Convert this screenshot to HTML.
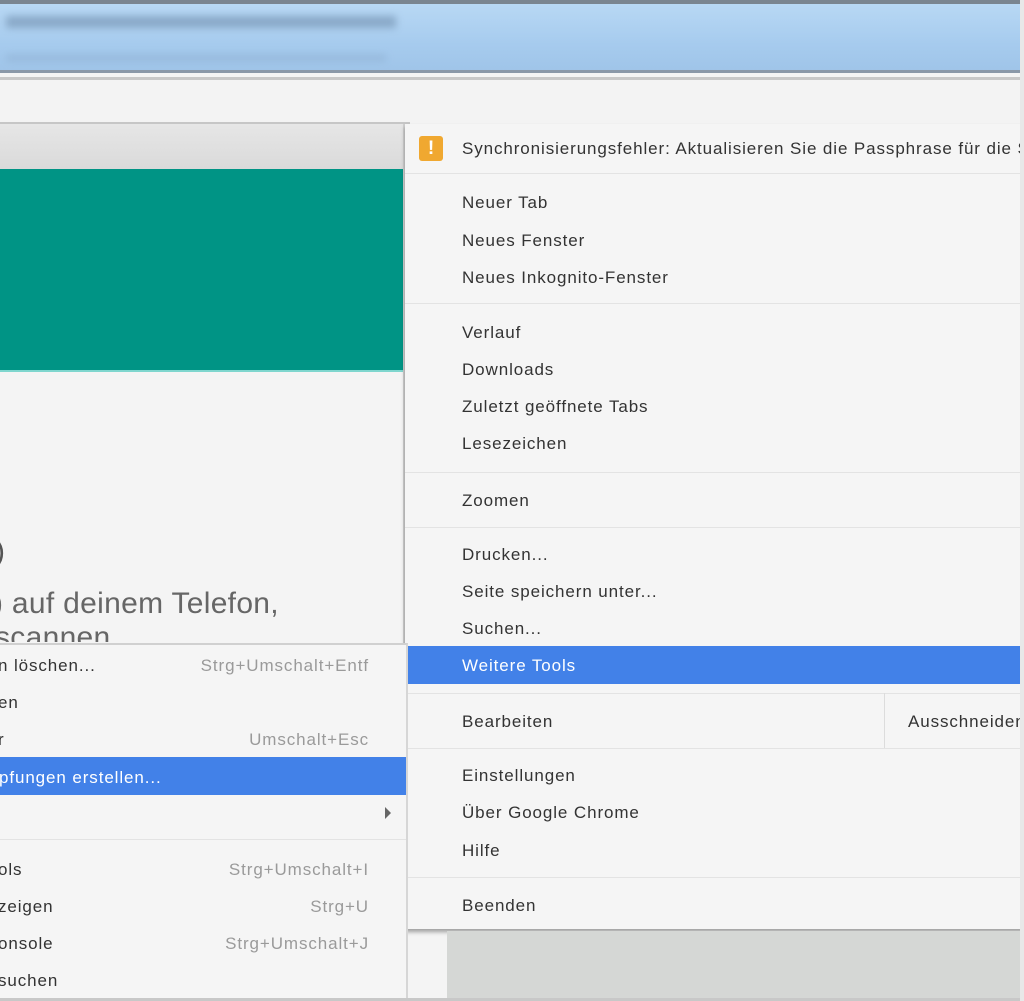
<!DOCTYPE html>
<html><head><meta charset="utf-8"><style>
*{margin:0;padding:0;box-sizing:border-box}
body{width:1024px;height:1001px;overflow:hidden;background:#f4f4f4;font-family:"Liberation Sans",sans-serif;position:relative;color:#333}
.a{position:absolute}
.t{position:absolute;font-size:17px;letter-spacing:0.9px;white-space:nowrap;line-height:20px}
.r{position:absolute;font-size:17px;letter-spacing:0.9px;white-space:nowrap;line-height:20px;color:#9a9a9a;text-align:right;right:655px}
.sep{position:absolute;height:1px;background:#e3e3e3}
</style></head><body>
<div class="a" style="left:0;top:0;width:1024px;height:4px;background:#7a8590"></div>
<div class="a" style="left:0;top:4px;width:1024px;height:68px;background:linear-gradient(#b8d8f4,#a6cbee 60%,#9fc4e8)"></div>
<div class="a" style="left:6px;top:16px;width:390px;height:12px;background:#7f9ebd;filter:blur(4px);opacity:.8"></div>
<div class="a" style="left:6px;top:55px;width:380px;height:6px;background:#8fb0d2;filter:blur(4px);opacity:.7"></div>
<div class="a" style="left:0;top:70px;width:1024px;height:3px;background:#8a98a8"></div>
<div class="a" style="left:0;top:73px;width:1024px;height:4px;background:#f4f4f4"></div>
<div class="a" style="left:0;top:77px;width:1024px;height:3px;background:#c8c8c8"></div>
<div class="a" style="left:0;top:80px;width:1024px;height:42px;background:#f3f3f3"></div>
<div class="a" style="left:0;top:122px;width:410px;height:2px;background:#c6c6c6"></div>
<div class="a" style="left:0;top:124px;width:404px;height:45px;background:linear-gradient(#e6e6e6,#dadada)"></div>
<div class="a" style="left:0;top:169px;width:404px;height:201px;background:#009485"></div>
<div class="a" style="left:0;top:370px;width:404px;height:2px;background:#7fd6ce"></div>
<div class="t" style="left:-5px;top:535px;font-size:30px;line-height:34px;color:#555;letter-spacing:0">)</div>
<div class="t" style="left:-7px;top:586px;font-size:30px;line-height:36px;color:#666;letter-spacing:0.3px">) auf deinem Telefon,</div>
<div class="t" style="left:-5px;top:620px;font-size:30px;line-height:36px;color:#666;letter-spacing:0.3px;height:22px;overflow:hidden">scannen</div>
<div class="a" style="left:403px;top:124px;width:2px;height:520px;background:#d0d0d0"></div>

<!-- right menu -->
<div class="a" style="left:405px;top:124px;width:619px;height:805px;background:#f5f5f5;box-shadow:0 3px 4px rgba(0,0,0,.35)"></div>
<div class="a" style="left:419px;top:136px;width:24px;height:25px;background:#f0a830;border-radius:3px;color:#fff;font-weight:bold;text-align:center;font-size:19px;line-height:25px">!</div>
<div class="t" style="left:462px;top:139px">Synchronisierungsfehler: Aktualisieren Sie die Passphrase für die S</div>
<div class="sep" style="left:405px;top:173px;width:619px"></div>
<div class="t" style="left:462px;top:193px">Neuer Tab</div>
<div class="t" style="left:462px;top:231px">Neues Fenster</div>
<div class="t" style="left:462px;top:268px">Neues Inkognito-Fenster</div>
<div class="sep" style="left:405px;top:303px;width:619px"></div>
<div class="t" style="left:462px;top:323px">Verlauf</div>
<div class="t" style="left:462px;top:360px">Downloads</div>
<div class="t" style="left:462px;top:397px">Zuletzt geöffnete Tabs</div>
<div class="t" style="left:462px;top:434px">Lesezeichen</div>
<div class="sep" style="left:405px;top:472px;width:619px"></div>
<div class="t" style="left:462px;top:491px">Zoomen</div>
<div class="sep" style="left:405px;top:527px;width:619px"></div>
<div class="t" style="left:462px;top:545px">Drucken...</div>
<div class="t" style="left:462px;top:582px">Seite speichern unter...</div>
<div class="t" style="left:462px;top:619px">Suchen...</div>
<div class="a" style="left:405px;top:646px;width:619px;height:38px;background:#4281e8"></div>
<div class="t" style="left:462px;top:656px;color:#fff">Weitere Tools</div>
<div class="sep" style="left:405px;top:693px;width:619px"></div>
<div class="t" style="left:462px;top:712px">Bearbeiten</div>
<div class="a" style="left:884px;top:693px;width:1px;height:55px;background:#dcdcdc"></div>
<div class="t" style="left:908px;top:712px">Ausschneiden</div>
<div class="sep" style="left:405px;top:748px;width:619px"></div>
<div class="t" style="left:462px;top:766px">Einstellungen</div>
<div class="t" style="left:462px;top:803px">Über Google Chrome</div>
<div class="t" style="left:462px;top:841px">Hilfe</div>
<div class="sep" style="left:405px;top:877px;width:619px"></div>
<div class="t" style="left:462px;top:896px">Beenden</div>
<div class="a" style="left:447px;top:931px;width:577px;height:70px;background:#d5d7d5"></div>

<!-- left submenu -->
<div class="a" style="left:0;top:643px;width:408px;height:358px;background:#f5f5f5;border-top:2px solid #d0d0d0;border-right:2px solid #d6d6d6"></div>
<div class="t" style="left:-2px;top:656px">n löschen...</div><div class="r" style="top:656px">Strg+Umschalt+Entf</div>
<div class="t" style="left:-2px;top:693px">en</div>
<div class="t" style="left:-2px;top:730px">r</div><div class="r" style="top:730px">Umschalt+Esc</div>
<div class="a" style="left:0;top:757px;width:406px;height:38px;background:#4281e8"></div>
<div class="t" style="left:-1px;top:768px;color:#fff">pfungen erstellen...</div>
<div class="a" style="left:385px;top:807px;width:0;height:0;border-top:6px solid transparent;border-bottom:6px solid transparent;border-left:6px solid #666"></div>
<div class="sep" style="left:0;top:839px;width:406px"></div>
<div class="t" style="left:-2px;top:860px">ols</div><div class="r" style="top:860px">Strg+Umschalt+I</div>
<div class="t" style="left:-2px;top:897px">zeigen</div><div class="r" style="top:897px">Strg+U</div>
<div class="t" style="left:-2px;top:934px">onsole</div><div class="r" style="top:934px">Strg+Umschalt+J</div>
<div class="t" style="left:-2px;top:971px">suchen</div>
<div class="a" style="left:0;top:998px;width:1024px;height:3px;background:#c8c8c8"></div>
<div class="a" style="left:1020px;top:0;width:4px;height:1001px;background:#e8e8e8"></div>
</body></html>
